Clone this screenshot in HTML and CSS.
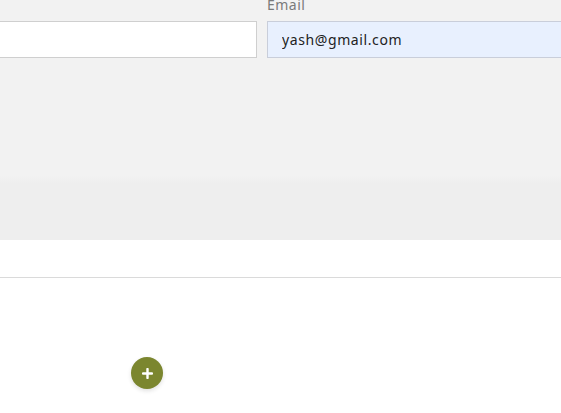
FILE: index.html
```html
<!DOCTYPE html>
<html lang="en">
<head>
    <meta charset="UTF-8">
    <meta name="viewport" content="width=device-width, initial-scale=1.0">
    <title>Profile</title>
    <link rel="stylesheet" href="styles.css">
</head>
<body>
    <section class="form-panel">
        <div class="form-row">
            <div class="field">
                <label class="field-label">Name</label>
                <input class="field-input" type="text" value="">
            </div>
            <div class="field">
                <label class="field-label">Email</label>
                <input class="field-input autofilled" type="email" value="yash@gmail.com">
            </div>
        </div>
    </section>
    <div class="panel-footer"></div>
    <section class="list-area">
        <button class="add-btn" aria-label="Add">
            <svg width="11" height="11" viewBox="0 0 11 11"><path d="M5.5 1v9M1 5.5h9" stroke="#fff" stroke-width="2.4" stroke-linecap="round"/></svg>
        </button>
    </section>
</body>
</html>
```

FILE: styles.css
```css
body {
    margin: 0;
    background-color: white;
    font-family: "Noto Sans", "Open Sans", sans-serif;
    overflow: hidden;
}
.form-panel {
    display: flow-root;
    height: 240px;
    background: linear-gradient(#f2f2f2 0, #f2f2f2 175px, #eeeeee 183px, #eeeeee 100%);
}
.form-row {
    display: grid;
    grid-template-columns: 300px 320px;
    column-gap: 10px;
    margin-left: -43px;
    margin-top: -5px;
}
.field {
    display: flex;
    flex-direction: column;
}
.field-label {
    font-size: 14px;
    line-height: 20px;
    letter-spacing: 0.5px;
    color: #7a7a7a;
    margin-bottom: 6px;
}
.field-input {
    box-sizing: border-box;
    height: 37px;
    border: 1px solid #cfcfcf;
    background-color: white;
    padding: 0 14px;
    font-family: "Noto Sans", sans-serif;
    font-size: 14px;
    letter-spacing: 0.6px;
    color: #222;
    outline: none;
}
.autofilled {
    background-color: #e8f0fe;
    border-color: #c9ceda;
}
.panel-footer {
    height: 37px;
    border-bottom: 1px solid #dadada;
}
.list-area {
    height: 140px;
    padding: 79px 0 0 131px;
    box-sizing: border-box;
}
.add-btn {
    width: 32px;
    height: 32px;
    border-radius: 50%;
    border: none;
    padding: 0;
    background-color: #7b862f;
    box-shadow: 0 2px 4px rgba(0, 0, 0, 0.12);
    display: flex;
    align-items: center;
    justify-content: center;
}
```
